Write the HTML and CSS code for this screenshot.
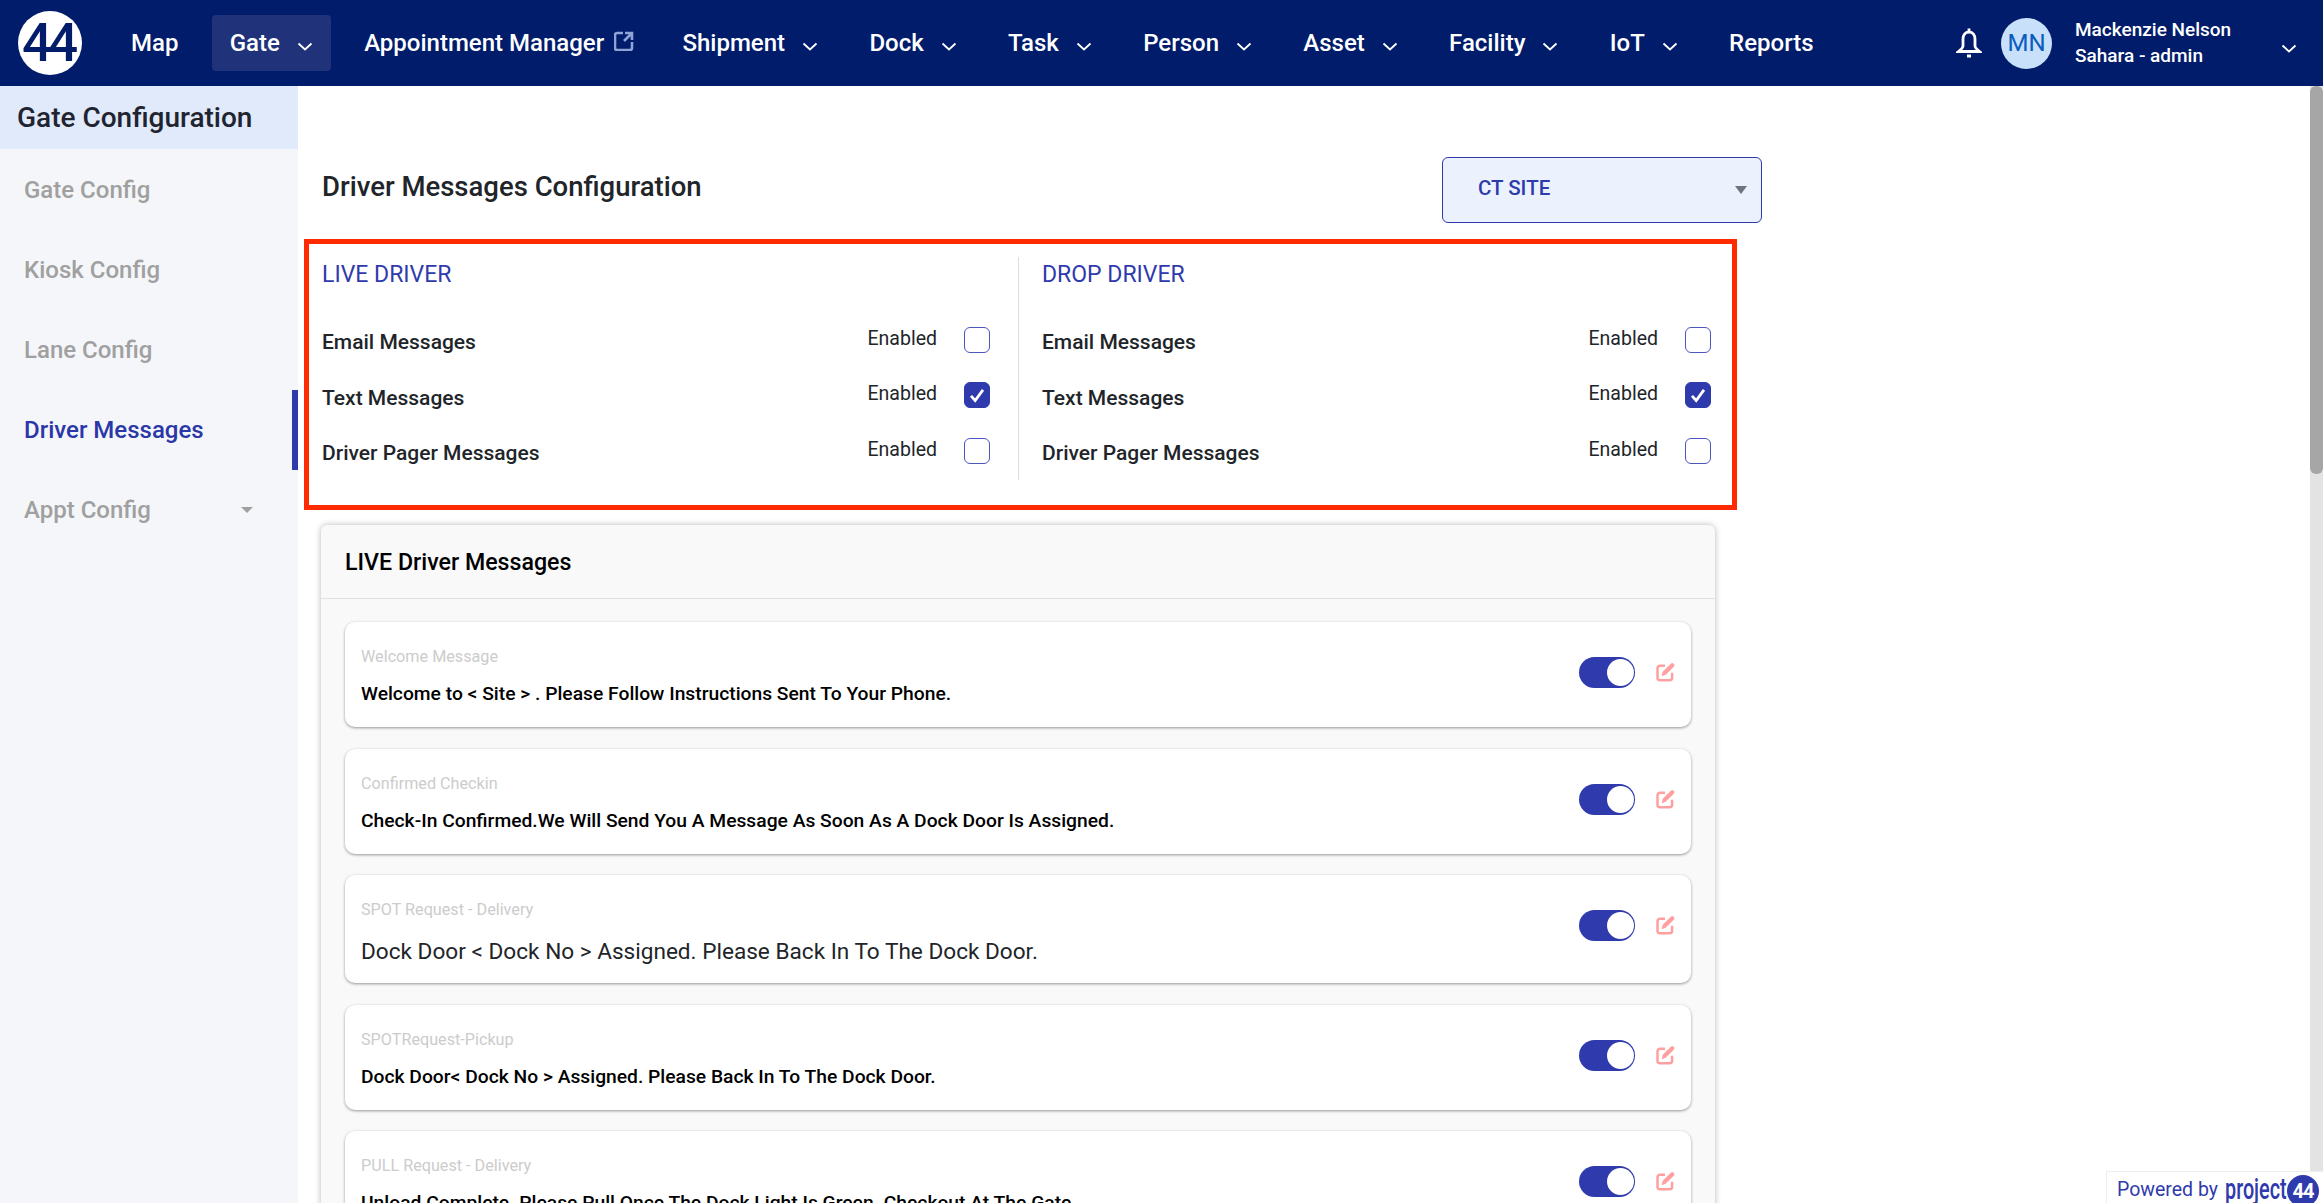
FILE: index.html
```html
<!DOCTYPE html>
<html lang="en">
<head>
<meta charset="UTF-8">
<meta name="viewport" content="width=device-width, initial-scale=1.0">
<title>Driver Messages Configuration</title>
<link rel="stylesheet" href="styles.css">
</head>
<body>
  <header class="topbar">
    <div class="logo">44</div>
    <nav class="nav">
      <a class="nav-item">Map</a>
      <a class="nav-item active">Gate <svg class="chevron" viewBox="0 0 16 9"><path d="M1.5 1.5 8 7.5l6.5-6"/></svg></a>
      <a class="nav-item external">Appointment Manager
        <svg class="ext-icon" viewBox="0 0 20 20"><path d="M9 2H3a2 2 0 0 0-2 2v13a2 2 0 0 0 2 2h13a2 2 0 0 0 2-2v-6"/><path d="M11 2h7v7M18 2l-8 8"/></svg>
      </a>
      <a class="nav-item">Shipment <svg class="chevron" viewBox="0 0 16 9"><path d="M1.5 1.5 8 7.5l6.5-6"/></svg></a>
      <a class="nav-item">Dock <svg class="chevron" viewBox="0 0 16 9"><path d="M1.5 1.5 8 7.5l6.5-6"/></svg></a>
      <a class="nav-item">Task <svg class="chevron" viewBox="0 0 16 9"><path d="M1.5 1.5 8 7.5l6.5-6"/></svg></a>
      <a class="nav-item">Person <svg class="chevron" viewBox="0 0 16 9"><path d="M1.5 1.5 8 7.5l6.5-6"/></svg></a>
      <a class="nav-item">Asset <svg class="chevron" viewBox="0 0 16 9"><path d="M1.5 1.5 8 7.5l6.5-6"/></svg></a>
      <a class="nav-item">Facility <svg class="chevron" viewBox="0 0 16 9"><path d="M1.5 1.5 8 7.5l6.5-6"/></svg></a>
      <a class="nav-item">IoT <svg class="chevron" viewBox="0 0 16 9"><path d="M1.5 1.5 8 7.5l6.5-6"/></svg></a>
      <a class="nav-item">Reports</a>
    </nav>
    <div class="user">
      <svg class="bell" viewBox="0 0 26 32"><path d="M13 5c-4 0-6 3-6 7v7c0 2-2 3.500-4.500 5.500h21C21 22.500 19 21 19 19v-7c0-4-2-7-6-7z"/><path d="M13 1.500V5M11 29h4"/></svg>
      <div class="avatar">MN</div>
      <div class="user-info">
        <div>Mackenzie Nelson</div>
        <div>Sahara - admin</div>
      </div>
      <svg class="chevron user-chevron" viewBox="0 0 16 9"><path d="M1.5 1.5 8 7.500l6.500-6"/></svg>
    </div>
  </header>

  <div class="page">
    <aside class="sidebar">
      <div class="sidebar-title">Gate Configuration</div>
      <a class="side-link">Gate Config</a>
      <a class="side-link">Kiosk Config</a>
      <a class="side-link">Lane Config</a>
      <a class="side-link current">Driver Messages</a>
      <a class="side-link">Appt Config <span class="caret"></span></a>
    </aside>

    <main class="main">
      <div class="title-row">
        <h1 class="page-title">Driver Messages Configuration</h1>
        <div class="site-select">CT SITE <span class="select-arrow"></span></div>
      </div>

      <section class="config">
        <div class="driver-col">
          <h2 class="driver-title">LIVE DRIVER</h2>
          <div class="opt-row">
            <span class="opt-label">Email Messages</span>
            <span class="opt-state">Enabled</span>
            <span class="checkbox"></span>
          </div>
          <div class="opt-row">
            <span class="opt-label">Text Messages</span>
            <span class="opt-state">Enabled</span>
            <span class="checkbox checked"><svg viewBox="0 0 26 26"><path d="M6.500 14l4.500 5L19.500 7.500"/></svg></span>
          </div>
          <div class="opt-row">
            <span class="opt-label">Driver Pager Messages</span>
            <span class="opt-state">Enabled</span>
            <span class="checkbox"></span>
          </div>
        </div>
        <div class="driver-col drop">
          <h2 class="driver-title">DROP DRIVER</h2>
          <div class="opt-row">
            <span class="opt-label">Email Messages</span>
            <span class="opt-state">Enabled</span>
            <span class="checkbox"></span>
          </div>
          <div class="opt-row">
            <span class="opt-label">Text Messages</span>
            <span class="opt-state">Enabled</span>
            <span class="checkbox checked"><svg viewBox="0 0 26 26"><path d="M6.500 14l4.500 5L19.500 7.500"/></svg></span>
          </div>
          <div class="opt-row">
            <span class="opt-label">Driver Pager Messages</span>
            <span class="opt-state">Enabled</span>
            <span class="checkbox"></span>
          </div>
        </div>
      </section>

      <section class="panel">
        <div class="panel-head">LIVE Driver Messages</div>
        <div class="panel-body">
          <div class="msg-card">
            <div class="msg-text">
              <div class="msg-name">Welcome Message</div>
              <div class="msg-body">Welcome to &lt; Site &gt; . Please Follow Instructions Sent To Your Phone.</div>
            </div>
            <div class="msg-actions">
              <span class="toggle"><span class="knob"></span></span>
              <svg class="edit" viewBox="0 0 24 24"><path class="edit-box" d="M12 4.500H6a3 3 0 0 0-3 3V19a3 3 0 0 0 3 3h11.500a3 3 0 0 0 3-3v-6"/><path class="edit-pen" d="M8 17l1.200-5.200L19 2c1-1 2-1 2.800-.2l1 1c.8.800.8 1.800-.2 2.800l-9.800 9.800z"/></svg>
            </div>
          </div>
          <div class="msg-card">
            <div class="msg-text">
              <div class="msg-name">Confirmed Checkin</div>
              <div class="msg-body">Check-In Confirmed.We Will Send You A Message As Soon As A Dock Door Is Assigned.</div>
            </div>
            <div class="msg-actions">
              <span class="toggle"><span class="knob"></span></span>
              <svg class="edit" viewBox="0 0 24 24"><path class="edit-box" d="M12 4.500H6a3 3 0 0 0-3 3V19a3 3 0 0 0 3 3h11.500a3 3 0 0 0 3-3v-6"/><path class="edit-pen" d="M8 17l1.200-5.200L19 2c1-1 2-1 2.800-.2l1 1c.8.800.8 1.800-.2 2.800l-9.800 9.800z"/></svg>
            </div>
          </div>
          <div class="msg-card">
            <div class="msg-text">
              <div class="msg-name">SPOT Request - Delivery</div>
              <div class="msg-body large">Dock Door &lt; Dock No &gt; Assigned. Please Back In To The Dock Door.</div>
            </div>
            <div class="msg-actions">
              <span class="toggle"><span class="knob"></span></span>
              <svg class="edit" viewBox="0 0 24 24"><path class="edit-box" d="M12 4.500H6a3 3 0 0 0-3 3V19a3 3 0 0 0 3 3h11.500a3 3 0 0 0 3-3v-6"/><path class="edit-pen" d="M8 17l1.200-5.200L19 2c1-1 2-1 2.800-.2l1 1c.8.800.8 1.800-.2 2.800l-9.800 9.800z"/></svg>
            </div>
          </div>
          <div class="msg-card">
            <div class="msg-text">
              <div class="msg-name">SPOTRequest-Pickup</div>
              <div class="msg-body">Dock Door&lt; Dock No &gt; Assigned. Please Back In To The Dock Door.</div>
            </div>
            <div class="msg-actions">
              <span class="toggle"><span class="knob"></span></span>
              <svg class="edit" viewBox="0 0 24 24"><path class="edit-box" d="M12 4.500H6a3 3 0 0 0-3 3V19a3 3 0 0 0 3 3h11.500a3 3 0 0 0 3-3v-6"/><path class="edit-pen" d="M8 17l1.200-5.200L19 2c1-1 2-1 2.800-.2l1 1c.8.800.8 1.800-.2 2.800l-9.800 9.800z"/></svg>
            </div>
          </div>
          <div class="msg-card">
            <div class="msg-text">
              <div class="msg-name">PULL Request - Delivery</div>
              <div class="msg-body">Unload Complete. Please Pull Once The Dock Light Is Green. Checkout At The Gate.</div>
            </div>
            <div class="msg-actions">
              <span class="toggle"><span class="knob"></span></span>
              <svg class="edit" viewBox="0 0 24 24"><path class="edit-box" d="M12 4.500H6a3 3 0 0 0-3 3V19a3 3 0 0 0 3 3h11.500a3 3 0 0 0 3-3v-6"/><path class="edit-pen" d="M8 17l1.200-5.200L19 2c1-1 2-1 2.800-.2l1 1c.8.800.8 1.800-.2 2.800l-9.800 9.800z"/></svg>
            </div>
          </div>
        </div>
      </section>
    </main>

    <div class="scrollbar"><div class="scroll-thumb"></div></div>
  </div>

  <div class="powered">
    <span class="powered-label">Powered by</span>
    <span class="brand-word">project</span>
    <span class="brand-badge">44</span>
  </div>
</body>
</html>
```

FILE: styles.css
```css
* {
  box-sizing: border-box;
}

body {
  margin: 0;
  height: 100vh;
  display: flex;
  flex-direction: column;
  overflow: hidden;
  background-color: #ffffff;
  font-family: Roboto, "Liberation Sans", sans-serif;
  color: #212529;
}

/* top bar */
.topbar {
  height: 86px;
  flex: none;
  display: flex;
  align-items: center;
  background-color: #001c6b;
  color: #ffffff;
}

.logo {
  width: 64px;
  height: 64px;
  flex: none;
  margin-left: 18px;
  border-radius: 50%;
  background-color: #ffffff;
  color: #001c6b;
  display: flex;
  align-items: center;
  justify-content: center;
  font-size: 53px;
  font-weight: 500;
  letter-spacing: -4px;
  padding-right: 4px;
}

.nav {
  display: flex;
  align-items: center;
  gap: 15.3px;
  margin-left: 31px;
}

.nav-item {
  height: 56px;
  padding: 0 18px;
  display: flex;
  align-items: center;
  gap: 17px;
  border-radius: 4px;
  font-size: 24px;
  font-weight: 500;
  white-space: nowrap;
}

.nav-item.active {
  background-color: #20337a;
}

.nav-item.external {
  gap: 10px;
  padding-right: 15px;
}

.chevron {
  width: 16px;
  height: 9px;
  margin-top: 7px;
  fill: none;
  stroke: #ffffff;
  stroke-width: 1.8;
}

.ext-icon {
  width: 20px;
  height: 20px;
  margin-top: -4px;
  fill: none;
  stroke: #8ea3d6;
  stroke-width: 2.6;
}

.user {
  margin-left: auto;
  display: flex;
  align-items: center;
  padding-right: 26px;
}

.bell {
  width: 26px;
  height: 32px;
  fill: none;
  stroke: #ffffff;
  stroke-width: 2.8;
}

.avatar {
  width: 51px;
  height: 51px;
  margin-left: 19px;
  border-radius: 50%;
  background-color: #c8e0f9;
  color: #0a5cbe;
  display: flex;
  align-items: center;
  justify-content: center;
  font-size: 24px;
}

.user-info {
  width: 206px;
  margin-left: 23px;
  font-size: 19px;
  font-weight: 500;
  line-height: 26px;
}

.user-chevron {
  margin-top: 10px;
}

/* page body */
.page {
  flex: 1;
  display: flex;
  min-height: 0;
}

.sidebar {
  width: 298px;
  flex: none;
  background-color: #f4f6f9;
}

.sidebar-title {
  height: 63px;
  padding-left: 17px;
  display: flex;
  align-items: center;
  background-color: #e0eafa;
  font-size: 28px;
  font-weight: 500;
  color: #1f2430;
}

.side-link {
  height: 80px;
  padding: 0 45px 0 24px;
  display: flex;
  align-items: center;
  justify-content: space-between;
  font-size: 24px;
  font-weight: 500;
  color: #a0a0a0;
}

.side-link:nth-child(2) {
  margin-top: 1px;
}

.side-link.current {
  color: #2b37a8;
  border-right: 6px solid #2f3aad;
  padding-right: 39px;
}

.caret {
  width: 0;
  height: 0;
  border-left: 6px solid transparent;
  border-right: 6px solid transparent;
  border-top: 6px solid #a0a0a0;
}

.main {
  flex: 1;
  min-width: 0;
  padding: 71px 0 0 24px;
  overflow: hidden;
}

.title-row {
  width: 1440px;
  height: 66px;
  display: flex;
  align-items: center;
  justify-content: space-between;
}

.page-title {
  margin: 0 0 8px;
  font-size: 27.5px;
  font-weight: 500;
  color: #212529;
}

.site-select {
  width: 320px;
  height: 66px;
  padding: 0 14px 4px 35px;
  display: flex;
  align-items: center;
  justify-content: space-between;
  background-color: #ebf2fd;
  border: 1px solid #2f3aad;
  border-radius: 6px;
  font-size: 20.5px;
  font-weight: 500;
  color: #2f3aad;
}

.select-arrow {
  width: 0;
  height: 0;
  margin-top: 4px;
  border-left: 6px solid transparent;
  border-right: 6px solid transparent;
  border-top: 8px solid #6c757d;
}

/* the red marked block */
.config {
  width: 1433px;
  height: 271px;
  margin: 16px 0 0 -18px;
  padding: 13px 0 0 13px;
  display: flex;
  border: 5px solid #ff2a00;
}

.driver-col {
  width: 696px;
  height: 223px;
  padding-right: 28px;
  padding-top: 5px;
}

.driver-col.drop {
  width: 693px;
  padding-left: 23px;
  padding-right: 0;
  border-left: 1px solid #dddddd;
}

.driver-title {
  margin: 0 0 24px;
  font-size: 23px;
  line-height: 26px;
  font-weight: 400;
  color: #2f3aad;
}

.opt-row {
  height: 55.5px;
  display: flex;
  align-items: center;
}

.opt-label {
  flex: 1;
  margin-top: 5px;
  font-size: 21px;
  font-weight: 500;
  color: #212529;
}

.opt-state {
  margin-bottom: 3px;
  margin-right: 27px;
  font-size: 19.5px;
  color: #212529;
}

.checkbox {
  width: 26px;
  height: 26px;
  border: 1px solid #4c56bd;
  border-radius: 6px;
  background-color: #ffffff;
}

.checkbox.checked {
  background-color: #2f3aad;
  border-color: #2f3aad;
}

.checkbox svg {
  display: block;
  width: 24px;
  height: 24px;
  fill: none;
  stroke: #ffffff;
  stroke-width: 3;
}

/* message list */
.panel {
  width: 1394px;
  margin: 15px 0 0 -1px;
  background-color: #f9f9f9;
  border-radius: 6px 6px 0 0;
  box-shadow: 0 0 6px rgba(0, 0, 0, 0.28);
}

.panel-head {
  height: 74px;
  padding-left: 24px;
  display: flex;
  align-items: center;
  border-bottom: 1px solid #e2e2e2;
  font-size: 23.2px;
  font-weight: 500;
  color: #000000;
}

.panel-body {
  padding: 23px 24px;
  display: flex;
  flex-direction: column;
  gap: 21.5px;
}

.msg-card {
  padding: 24px 16px 20px;
  display: flex;
  justify-content: space-between;
  align-items: flex-start;
  background-color: #ffffff;
  border-radius: 10px;
  box-shadow: 0 1px 3px rgba(0, 0, 0, 0.4);
}

.msg-name {
  font-size: 16.2px;
  line-height: 22px;
  color: #cccccc;
}

.msg-body {
  margin-top: 13px;
  font-size: 19.25px;
  line-height: 26px;
  font-weight: 500;
  color: #000000;
}

.msg-body.large {
  margin-top: 18px;
  margin-bottom: -2px;
  font-size: 22.6px;
  font-weight: 400;
  color: #212529;
}

.msg-actions {
  margin-top: 11px;
  display: flex;
  align-items: center;
  gap: 20px;
}

.toggle {
  width: 56px;
  height: 31px;
  padding: 2px 1px;
  display: flex;
  justify-content: flex-end;
  background-color: #2f3aad;
  border-radius: 16px;
}

.knob {
  width: 27px;
  height: 27px;
  border-radius: 50%;
  background-color: #ffffff;
}

.edit {
  width: 20px;
  height: 20px;
  margin-top: -1px;
}

.edit-box {
  fill: none;
  stroke: #ffa0a0;
  stroke-width: 3;
}

.edit-pen {
  fill: #ffa0a0;
}

/* scrollbar drawn beside the content */
.scrollbar {
  width: 13px;
  flex: none;
  background-color: #e3e3e3;
}

.scroll-thumb {
  height: 388px;
  background-color: #a6a6a6;
  border-radius: 6px;
}

/* powered by badge, sits over the page corner */
.powered {
  position: absolute;
  right: 0;
  bottom: 0;
  width: 217px;
  height: 32px;
  padding: 0 0 0 10px;
  display: flex;
  align-items: flex-start;
  overflow: hidden;
  background-color: #ffffff;
  border: 1px solid #eeeeee;
  border-width: 1px 0 0 1px;
  font-size: 19.5px;
  line-height: 36px;
  color: #2f3aad;
}

.powered-label {
  width: 100px;
  flex: none;
  white-space: nowrap;
}

.brand-word {
  margin-left: 8px;
  width: 62px;
  flex: none;
  font-size: 30px;
  font-weight: 500;
  line-height: 34px;
  transform: scaleX(0.66);
  transform-origin: left center;
  white-space: nowrap;
}

.brand-badge {
  width: 32px;
  height: 32px;
  flex: none;
  margin-top: 3px;
  border-radius: 50%;
  background-color: #2f3aad;
  color: #ffffff;
  font-size: 20px;
  font-weight: 700;
  line-height: 32px;
  text-align: center;
  letter-spacing: -1px;
}
```
